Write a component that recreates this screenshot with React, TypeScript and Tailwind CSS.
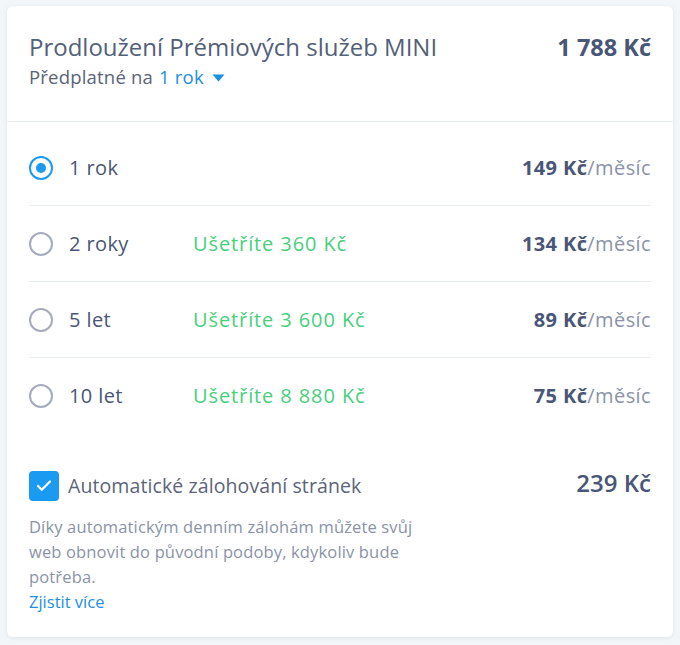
import { Check } from 'lucide-react'

interface Plan {
  label: string
  saving?: string
  price: string
  checked?: boolean
}

const plans: Plan[] = [
  { label: '1 rok', price: '149 Kč', checked: true },
  { label: '2 roky', saving: 'Ušetříte 360 Kč', price: '134 Kč' },
  { label: '5 let', saving: 'Ušetříte 3 600 Kč', price: '89 Kč' },
  { label: '10 let', saving: 'Ušetříte 8 880 Kč', price: '75 Kč' }
]

function Radio({ checked }: { checked?: boolean }) {
  if (checked) {
    return (
      <span className="flex h-6 w-6 shrink-0 items-center justify-center rounded-full border-[2.5px] border-[#1a9af0]">
        <span className="h-[10px] w-[10px] rounded-full bg-[#1a9af0]" />
      </span>
    )
  }
  return <span className="h-6 w-6 shrink-0 rounded-full border-2 border-[#a4acbb]" />
}

export default function App() {
  return (
    <div
      className="min-h-screen bg-[#f2f6f9] px-[7px] pt-[6px]"
      style={{ fontFamily: '"Open Sans", "Liberation Sans", sans-serif' }}
    >
      <div className="h-[631px] w-[666px] rounded-md bg-white shadow-[0_1px_4px_rgba(120,150,180,0.18)]">
        <div className="flex items-start justify-between border-b border-[#e8eef3] px-[22px] pt-[26px] pb-[31px]">
          <div>
            <h1 className="text-[24px] leading-[30px] text-[#53607a]">
              Prodloužení Prémiových služeb MINI
            </h1>
            <p className="mt-[2px] flex items-center text-[18.5px] tracking-[0.2px] leading-[26px] text-[#5b6478]">
              Předplatné na
              <span className="ml-[6px] text-[#1d8fe0]">1 rok</span>
              <svg className="ml-[8px] mt-[2px]" width="13" height="8" viewBox="0 0 13 8">
                <path d="M0.5 0.5h12L6.5 7.5z" fill="#1d8fe0" />
              </svg>
            </p>
          </div>
          <span className="text-[23.5px] font-bold leading-[30px] text-[#4a5675]">1 788 Kč</span>
        </div>

        <div className="px-[22px] pt-[8px]">
          {plans.map((plan, i) => (
            <div
              key={plan.label}
              className={`flex h-[76px] items-center text-[20px] tracking-[0.4px] ${i < plans.length - 1 ? 'border-b border-[#e8eef3]' : ''}`}
            >
              <Radio checked={plan.checked} />
              <span className="ml-4 w-[124px] text-[#4a5675]">{plan.label}</span>
              <span className="flex-1 tracking-[0.9px] text-[#48cf7c]">{plan.saving}</span>
              <span className="text-[#8a93a8]">
                <span className="font-bold text-[#4a5675]">{plan.price}</span>/měsíc
              </span>
            </div>
          ))}
        </div>

        <div className="px-[22px] pt-[37px]">
          <div className="flex items-start justify-between">
            <label className="flex items-center gap-[9px]">
              <span className="flex h-[30px] w-[30px] items-center justify-center rounded-[4px] bg-[#1a9af0]">
                <Check className="h-[18px] w-[18px] text-white" strokeWidth={3} />
              </span>
              <span className="text-[19.5px] tracking-[0.1px] text-[#5b6478]">Automatické zálohování stránek</span>
            </label>
            <span className="-mt-[3px] text-[24px] font-semibold leading-[30px] text-[#4a5675]">239 Kč</span>
          </div>
          <p className="mt-[13px] max-w-[412px] text-[16.5px] tracking-[0.15px] leading-[25px] text-[#8a93a6]">
            Díky automatickým denním zálohám můžete svůj web obnovit do původní podoby, kdykoliv bude potřeba.
          </p>
          <a className="block text-[16.5px] leading-[25px] text-[#1d8fe0]">Zjistit více</a>
        </div>
      </div>
    </div>
  )
}
